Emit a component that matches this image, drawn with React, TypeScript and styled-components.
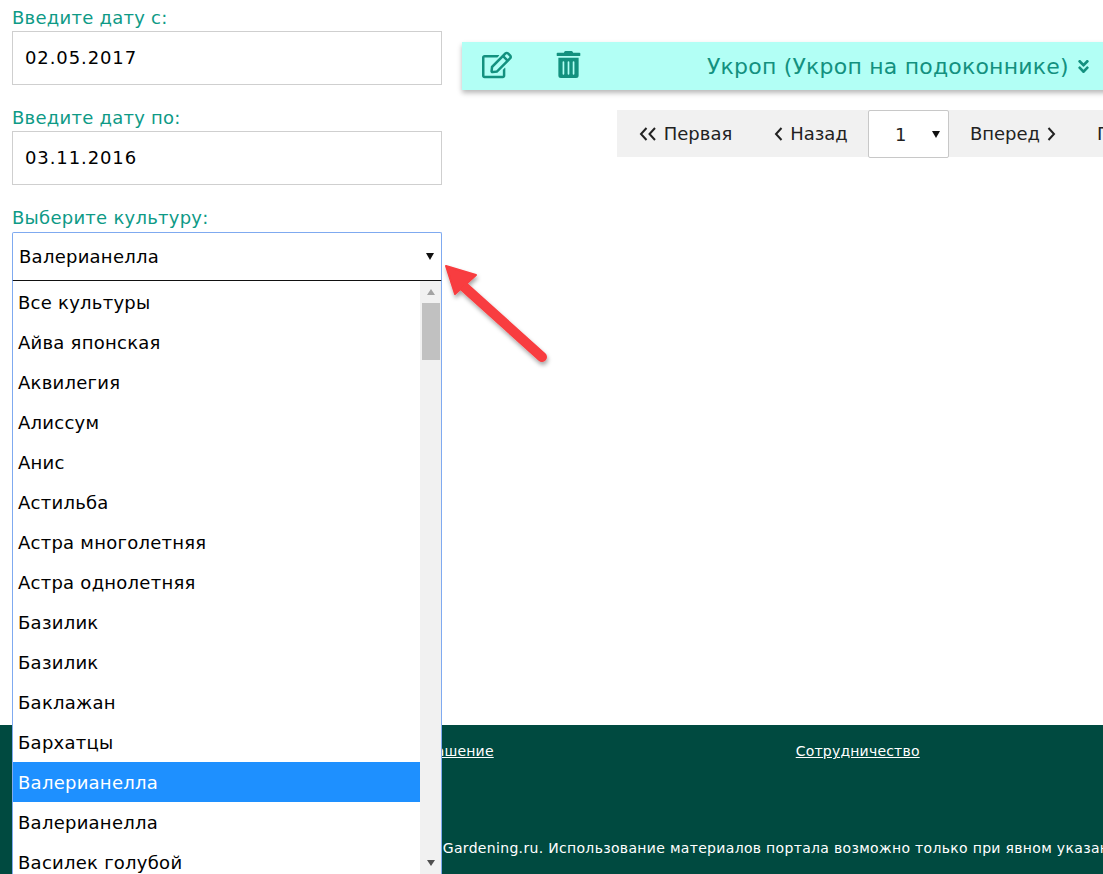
import React from 'react'
import styled, { createGlobalStyle } from 'styled-components'
import { FaRegEdit, FaTrashAlt, FaAngleDoubleDown } from 'react-icons/fa'

const GlobalStyle = createGlobalStyle`
  html, body {
    margin: 0;
    padding: 0;
    background: #fff;
    overflow: hidden;
  }
  * {
    box-sizing: border-box;
  }
`

const Page = styled.div`
  width: 1103px;
  height: 874px;
  overflow: hidden;
  position: relative;
  display: flex;
  flex-direction: column;
  font-family: 'DejaVu Sans', Verdana, sans-serif;
  color: #000;
`

const Main = styled.div`
  height: 725px;
  flex: none;
  display: flex;
  align-items: flex-start;
  gap: 20px;
  padding-left: 12px;
`

const FilterColumn = styled.div`
  width: 430px;
  flex: none;
  position: relative;
`

const FieldLabel = styled.label`
  display: block;
  height: 31px;
  padding-top: 6px;
  font-size: 18px;
  line-height: 24px;
  letter-spacing: 0.25px;
  color: #0e9a86;
  white-space: nowrap;
`

const DateField = styled.div`
  height: 54px;
  margin-bottom: 15px;
  padding: 0 0 1px 12px;
  display: flex;
  align-items: center;
  border: 1px solid #cfcfcf;
  font-size: 18px;
  letter-spacing: 0.9px;
`

const SelectBox = styled.div`
  height: 50px;
  margin-top: 1px;
  padding: 0 7px 0 6px;
  display: flex;
  align-items: center;
  justify-content: space-between;
  border: 1px solid #7faaf0;
  border-bottom: 2px solid #111;
  border-radius: 2px 2px 0 0;
  font-size: 18px;
  letter-spacing: 0.25px;
  background: #fff;
`

const Caret = styled.span`
  width: 0;
  height: 0;
  border-left: 4px solid transparent;
  border-right: 4px solid transparent;
  border-top: 7px solid #111;
`

const OptionsPopup = styled.div`
  position: absolute;
  left: 0;
  top: 281px;
  width: 430px;
  height: 600px;
  display: flex;
  background: #fff;
  border-left: 1px solid #7faaf0;
  border-right: 1px solid #7faaf0;
  z-index: 2;
`

const OptionsList = styled.ul`
  list-style: none;
  margin: 0;
  padding: 1px 0 0;
  flex: 1;
  min-width: 0;
`

const OptionItem = styled.li<{ $selected?: boolean }>`
  height: 40px;
  padding-left: 5px;
  display: flex;
  align-items: center;
  font-size: 18px;
  letter-spacing: 0.25px;
  white-space: nowrap;
  background: ${(p) => (p.$selected ? '#1e90ff' : 'transparent')};
  color: ${(p) => (p.$selected ? '#fff' : '#000')};
`

const ScrollTrack = styled.div`
  width: 21px;
  flex: none;
  height: 593px;
  background: #f1f1f1;
  display: flex;
  flex-direction: column;
  align-items: center;
  padding: 8px 1px 0 2px;
`

const ScrollUp = styled.span`
  width: 0;
  height: 0;
  margin-bottom: 8px;
  border-left: 4px solid transparent;
  border-right: 4px solid transparent;
  border-bottom: 6px solid #a3a3a3;
`

const ScrollThumb = styled.div`
  width: 100%;
  height: 57px;
  background: #c1c1c1;
`

const ScrollDown = styled.span`
  width: 0;
  height: 0;
  margin-top: auto;
  margin-bottom: 8px;
  border-left: 4px solid transparent;
  border-right: 4px solid transparent;
  border-top: 6px solid #505050;
`

const ArrowMark = styled.svg`
  position: absolute;
  left: 428px;
  top: 258px;
  z-index: 3;
  overflow: visible;
`

const ContentColumn = styled.div`
  flex: 1;
  min-width: 0;
  padding-top: 42px;
  display: flex;
  flex-direction: column;
  align-items: flex-start;
`

const CropPanel = styled.div`
  width: 660px;
  height: 48px;
  flex: none;
  display: flex;
  align-items: center;
  background: #b2fff5;
  box-shadow: 0 3px 5px rgba(0, 0, 0, 0.28);
  color: #13917f;
`

const PanelIcon = styled.span<{ $width: number; $size: number }>`
  width: ${(p) => p.$width}px;
  flex: none;
  display: flex;
  font-size: ${(p) => p.$size}px;
  padding-left: 20px;
  padding-bottom: 3px;
`

const CropTitle = styled.div`
  margin-left: 112px;
  font-size: 22px;
  white-space: nowrap;
  display: flex;
  align-items: center;
  gap: 6px;
  letter-spacing: 0.2px;

  svg {
    font-size: 17px;
  }
`

const Pagination = styled.div`
  margin: 20px 0 0 155px;
  width: 520px;
  height: 47px;
  flex: none;
  display: flex;
  align-items: center;
  background: #f1f1f1;
  font-size: 18px;
  color: #222;
  white-space: nowrap;
`

const PageLink = styled.span<{ $width: number }>`
  width: ${(p) => p.$width}px;
  flex: none;
  display: flex;
  align-items: center;
  justify-content: center;
  gap: 7px;
`

const LastPageLink = styled.span`
  flex: none;
  padding-left: 20px;
`

const PageSelect = styled.div`
  width: 81px;
  height: 48px;
  flex: none;
  display: flex;
  align-items: center;
  justify-content: space-between;
  padding: 2px 8px 0 26px;
  background: #fff;
  border: 1px solid #c8c8c8;
  border-radius: 2px;
`

const PagerChevron = styled.svg`
  flex: none;
  color: #222;
`

const Footer = styled.footer`
  flex: 1;
  background: #004a40;
  color: #fff;
  font-size: 14px;
  letter-spacing: 0.2px;
  padding-top: 18px;
  display: flex;
  flex-direction: column;
`

const FooterLinks = styled.div`
  display: flex;
  height: 97px;
  padding-left: 258px;
  gap: 302px;
`

const FooterLink = styled.a`
  color: #fff;
  text-decoration: underline;
  white-space: nowrap;
`

const Copyright = styled.div`
  margin-left: 382px;
  white-space: nowrap;
  letter-spacing: 0.32px;
`

const cultures = [
  'Все культуры',
  'Айва японская',
  'Аквилегия',
  'Алиссум',
  'Анис',
  'Астильба',
  'Астра многолетняя',
  'Астра однолетняя',
  'Базилик',
  'Базилик',
  'Баклажан',
  'Бархатцы',
  'Валерианелла',
  'Валерианелла',
  'Василек голубой',
]

const App: React.FC = () => {
  return (
    <>
      <GlobalStyle />
      <Page>
        <Main>
          <FilterColumn>
            <FieldLabel>Введите дату с:</FieldLabel>
            <DateField>02.05.2017</DateField>
            <FieldLabel>Введите дату по:</FieldLabel>
            <DateField>03.11.2016</DateField>
            <FieldLabel>Выберите культуру:</FieldLabel>
            <SelectBox>
              Валерианелла
              <Caret />
            </SelectBox>
            <OptionsPopup>
              <OptionsList>
                {cultures.map((name, i) => (
                  <OptionItem key={i} $selected={i === 12}>
                    {name}
                  </OptionItem>
                ))}
              </OptionsList>
              <ScrollTrack>
                <ScrollUp />
                <ScrollThumb />
                <ScrollDown />
              </ScrollTrack>
            </OptionsPopup>
            <ArrowMark width="110" height="110" viewBox="0 0 110 110">
              <defs>
                <filter id="arrowShadow" x="-20%" y="-20%" width="150%" height="150%">
                  <feDropShadow dx="1" dy="3" stdDeviation="2" floodColor="#000" floodOpacity="0.35" />
                </filter>
              </defs>
              <g filter="url(#arrowShadow)">
                <path d="M22 27 L102 99" stroke="#f83c3f" strokeWidth="10" strokeLinecap="round" fill="none" />
                <path d="M6 8 L36 17 L15 36 Z" fill="#f83c3f" stroke="#f83c3f" strokeWidth="2" strokeLinejoin="round" />
              </g>
            </ArrowMark>
          </FilterColumn>
          <ContentColumn>
            <CropPanel>
              <PanelIcon $width={73} $size={30}>
                <FaRegEdit />
              </PanelIcon>
              <PanelIcon $width={60} $size={27}>
                <FaTrashAlt />
              </PanelIcon>
              <CropTitle>
                Укроп (Укроп на подоконнике)
                <FaAngleDoubleDown />
              </CropTitle>
            </CropPanel>
            <Pagination>
              <PageLink $width={137}>
                <PagerChevron width="18" height="14" viewBox="0 0 18 14" fill="none" stroke="currentColor" strokeWidth="2">
                  <path d="M7.5 1 L2 7 L7.5 13" />
                  <path d="M16 1 L10.5 7 L16 13" />
                </PagerChevron>
                Первая
              </PageLink>
              <PageLink $width={114}>
                <PagerChevron width="9" height="14" viewBox="0 0 9 14" fill="none" stroke="currentColor" strokeWidth="2">
                  <path d="M7.5 1 L2 7 L7.5 13" />
                </PagerChevron>
                Назад
              </PageLink>
              <PageSelect>
                1
                <Caret />
              </PageSelect>
              <PageLink $width={128}>
                Вперед
                <PagerChevron width="9" height="14" viewBox="0 0 9 14" fill="none" stroke="currentColor" strokeWidth="2">
                  <path d="M1.5 1 L7 7 L1.5 13" />
                </PagerChevron>
              </PageLink>
              <LastPageLink>Последняя</LastPageLink>
            </Pagination>
          </ContentColumn>
        </Main>
        <Footer>
          <FooterLinks>
            <FooterLink href="#">Пользовательское соглашение</FooterLink>
            <FooterLink href="#">Сотрудничество</FooterLink>
          </FooterLinks>
          <Copyright>
            © 2017 Gardening.ru. Использование материалов портала возможно только при явном указании ссылки
          </Copyright>
        </Footer>
      </Page>
    </>
  )
}

export default App
